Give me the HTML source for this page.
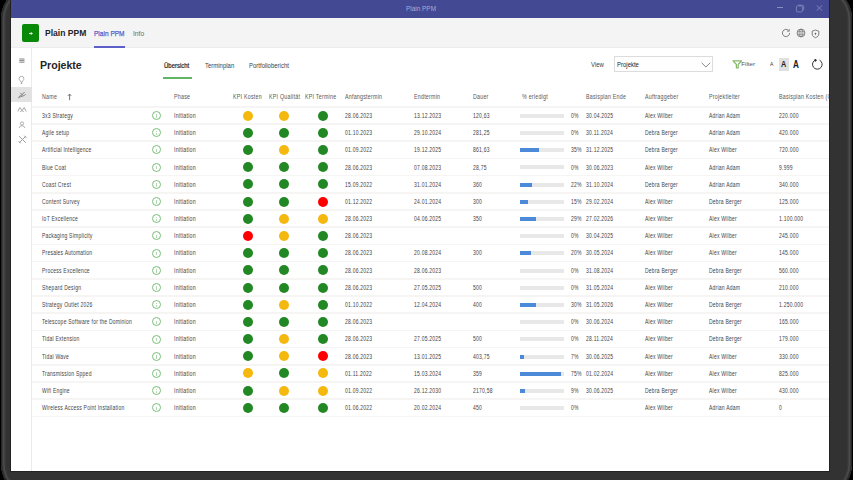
<!DOCTYPE html>
<html><head><meta charset="utf-8"><style>
*{margin:0;padding:0;box-sizing:border-box}
html,body{width:853px;height:480px;overflow:hidden;background:#000;font-family:"Liberation Sans",sans-serif}
.abs{position:absolute}
#bezel{position:absolute;left:1px;top:-14px;width:850.5px;height:511px;border-radius:33px;background:#323232;box-shadow:inset 0 0 0 1px #262626, inset 0 0 0 2px #3a3a3a, inset 0 0 0 3.5px #4a4a4a, inset 0 0 0 5px #383838}
#sedge{position:absolute;left:10px;top:-1px;width:820px;height:473px;background:#222}
#screen{position:absolute;left:11px;top:0;width:818px;height:471px;background:#fff;overflow:hidden}
#root{position:absolute;left:-11px;top:0;width:853px;height:480px}
#title{position:absolute;left:0;top:0;width:853px;height:18px;background:#434992}
#appbar{position:absolute;left:0;top:18px;width:853px;height:29.5px;background:#f4f4f4;border-bottom:1px solid #ececec}
#rail{position:absolute;left:11px;top:47.5px;width:20.5px;height:440px;background:#fff;border-right:1px solid #ebebeb}
.tx{position:absolute;white-space:nowrap;font-size:6.8px;letter-spacing:0.3px;line-height:8px;color:#444;transform-origin:0 50%;transform:translateY(-3.5px) scaleX(0.74)}
.hd{color:#575757;transform:translateY(-3.5px) scaleX(0.78)}
.ph{transform:translateY(-3.5px) scaleX(0.77)}
.hl{position:absolute;left:32px;width:800px;height:1.6px;background:#f6f5f3}
.dot{position:absolute;width:10px;height:10px;border-radius:50%}
.info{position:absolute;width:9px;height:9px;border-radius:50%;border:0.9px solid #78bf78}
.info i{position:absolute;left:3.3px;top:3.4px;width:0.8px;height:2.4px;background:#b0d8b0}
.info b{position:absolute;left:3.3px;top:2.2px;width:0.8px;height:0.7px;background:#b0d8b0}
.bar{position:absolute;left:519.6px;width:44.5px;height:4px;background:#e8e8e8}
.bar div{height:4px;background:#4a8ad8}
</style></head><body>
<div id="bezel"></div><div id="sedge"></div>
<div id="screen"><div id="root">
<div id="title"></div>
<div id="appbar"></div>
<div id="rail"></div>
<div class="tx" style="letter-spacing:0;left:405.6px;top:9px;font-size:7.3px;color:#a9abd8;transform:translateY(-4px) scaleX(0.88)">Plain PPM</div>
<div class="abs" style="left:777.3px;top:7.2px;width:6px;height:0.8px;background:#8b8dc4"></div>
<svg class="abs" style="left:795px;top:4px" width="10" height="9" viewBox="0 0 10 9"><rect x="1.4" y="1.9" width="6" height="6" rx="1" fill="none" stroke="#8b8dc4" stroke-width="0.8"/><path d="M3 1.2H7.5a1.2 1.2 0 0 1 1.2 1.2V6.4" fill="none" stroke="#8b8dc4" stroke-width="0.8"/></svg>
<svg class="abs" style="left:816px;top:5px" width="7" height="6" viewBox="0 0 7 6"><path d="M0.5 0.2L6.3 5.8M6.3 0.2L0.5 5.8" stroke="#8b8dc4" stroke-width="0.8"/></svg>
<div class="abs" style="left:21.6px;top:23.9px;width:17.8px;height:17.7px;border-radius:2px;background:#088a08"></div>
<svg class="abs" style="left:27.5px;top:30.5px" width="6" height="5" viewBox="0 0 6 5"><path d="M1 2.5H4.2M2.9 1.2L4.2 2.5L2.9 3.8" stroke="#fff" stroke-width="0.9" fill="none"/></svg>
<div class="tx" style="letter-spacing:0;left:44.6px;top:33px;font-size:9.4px;line-height:10px;font-weight:bold;color:#252424;transform:translateY(-5px) scaleX(0.91)">Plain PPM</div>
<div class="tx" style="letter-spacing:0;left:93.7px;top:33px;font-size:7.8px;color:#5a5dc6;-webkit-text-stroke:0.25px #5a5dc6;transform:translateY(-2.9px) scaleX(0.84)">Plain PPM</div>
<div class="abs" style="left:93.7px;top:45.5px;width:31px;height:2px;background:#5b5fc7"></div>
<div class="tx" style="letter-spacing:0;left:132.7px;top:33px;font-size:7.8px;color:#6b6b6b;transform:translateY(-2.9px) scaleX(0.86)">Info</div>
<svg class="abs" style="left:781px;top:28px" width="10" height="10" viewBox="0 0 10 10"><path d="M8.6 5A3.6 3.6 0 1 1 7.4 2.3" fill="none" stroke="#616161" stroke-width="0.8"/><path d="M8.2 1.2V3.2H6.2" fill="none" stroke="#616161" stroke-width="0.8"/></svg>
<svg class="abs" style="left:796px;top:28px" width="10" height="10" viewBox="0 0 10 10"><circle cx="5" cy="5" r="3.9" fill="none" stroke="#666" stroke-width="0.8"/><ellipse cx="5" cy="5" rx="1.9" ry="3.9" fill="none" stroke="#666" stroke-width="0.55"/><path d="M1.3 3.7H8.7M1.3 6.3H8.7M5 1.1V8.9" stroke="#666" stroke-width="0.55"/></svg>
<svg class="abs" style="left:811px;top:28.5px" width="9" height="10" viewBox="0 0 9 10"><path d="M4.5 1L1.2 2.2V5C1.2 6.9 2.7 8 4.5 8.7C6.3 8 7.8 6.9 7.8 5V2.2Z" fill="none" stroke="#616161" stroke-width="0.8"/><circle cx="4.5" cy="4.6" r="0.8" fill="#616161"/><path d="M3.9 4.8H5.1L4.5 6.3Z" fill="#616161"/></svg>
<div class="abs" style="left:11px;top:86.8px;width:20.5px;height:15.2px;background:#e2e2e2"></div>
<svg class="abs" style="left:19px;top:57.5px" width="6" height="6" viewBox="0 0 6 6"><path d="M0.3 1H5.5M0.3 2.6H5.5M0.3 4.2H5.5" stroke="#777" stroke-width="0.9"/></svg>
<svg class="abs" style="left:17px;top:75px" width="9" height="10" viewBox="0 0 9 10"><path d="M4.5 1.3A2.4 2.4 0 0 1 6.9 3.7C6.9 5 5.4 5.6 5.1 7.2H3.9C3.6 5.6 2.1 5 2.1 3.7A2.4 2.4 0 0 1 4.5 1.3ZM4 8H5L4.5 9Z" fill="none" stroke="#9a9a9a" stroke-width="0.8"/></svg>
<svg class="abs" style="left:17px;top:90px" width="10" height="10" viewBox="0 0 10 10"><path d="M1.2 8C2.5 7 4 6.5 5.5 6.2S8 5 8.8 4.2M1.8 6.8C3 5.6 4.5 5 6 4.6M3.4 2.8L5 4.8L7.6 2" fill="none" stroke="#858585" stroke-width="1"/></svg>
<svg class="abs" style="left:17px;top:105px" width="10" height="8" viewBox="0 0 10 8"><path d="M0.8 6.5L2.8 2.5L5 5.5L7.2 2.5L9.2 6.5M3.2 6.8L5 5.5L6.8 6.8" fill="none" stroke="#9c9c9c" stroke-width="0.9"/></svg>
<svg class="abs" style="left:17.5px;top:120.5px" width="8" height="8" viewBox="0 0 8 8"><circle cx="4" cy="2.5" r="1.6" fill="none" stroke="#9c9c9c" stroke-width="0.8"/><path d="M1.2 7C1.5 5.5 2.6 4.7 4 4.7S6.5 5.5 6.8 7" fill="none" stroke="#9c9c9c" stroke-width="0.8"/></svg>
<svg class="abs" style="left:17.5px;top:134.8px" width="9" height="9" viewBox="0 0 9 9"><path d="M1.2 1.2L7.8 7.8M7.8 1.2L1.2 7.8M6.3 0.7L8.3 2.7M0.7 6.3L2.7 8.3" fill="none" stroke="#9a9a9a" stroke-width="1"/></svg>
<div class="tx" style="letter-spacing:0;left:39.7px;top:65.5px;font-size:11.5px;line-height:12px;font-weight:bold;color:#242424;transform:translateY(-7px) scaleX(0.92)">Projekte</div>
<div class="tx" style="letter-spacing:0;left:164.1px;top:65.7px;font-size:6.8px;color:#242424;-webkit-text-stroke:0.2px #242424;transform:translateY(-4px) scaleX(0.88)">&Uuml;bersicht</div>
<div class="abs" style="left:163.3px;top:77px;width:29.2px;height:1.5px;background:#5fb563"></div>
<div class="tx" style="letter-spacing:0;left:204.8px;top:65.7px;font-size:6.8px;color:#424242;transform:translateY(-4px) scaleX(0.88)">Terminplan</div>
<div class="tx" style="letter-spacing:0;left:249px;top:65.7px;font-size:6.8px;color:#424242;transform:translateY(-4px) scaleX(0.88)">Portfoliobericht</div>
<div class="tx" style="letter-spacing:0;left:590.6px;top:65.2px;font-size:6.8px;color:#424242;transform:translateY(-4px) scaleX(0.88)">View</div>
<div class="abs" style="left:614.3px;top:56.3px;width:98.5px;height:16.2px;border:1px solid #dcdcdc;background:#fff"></div>
<div class="tx" style="letter-spacing:0;left:617px;top:65.2px;font-size:6.8px;color:#242424;transform:translateY(-4px) scaleX(0.88)">Projekte</div>
<svg class="abs" style="left:700.8px;top:62px" width="10" height="6" viewBox="0 0 10 6"><path d="M0.6 0.8L4.9 5L9.2 0.8" fill="none" stroke="#666" stroke-width="0.8"/></svg>
<svg class="abs" style="left:731.7px;top:59.6px" width="11" height="9" viewBox="0 0 11 9"><path d="M1 0.9H9.6L6.2 4.5V7.9H4.4V4.5Z" fill="none" stroke="#86b86a" stroke-width="1.2" stroke-linejoin="round"/></svg>
<div class="tx" style="letter-spacing:0;left:741.3px;top:64.2px;font-size:6.2px;color:#555;transform:translateY(-4px) scaleX(1.0)">Filter</div>
<div class="tx" style="letter-spacing:0;left:769.5px;top:64px;font-size:5.5px;color:#333;transform:translateY(-4px) scaleX(0.9)">A</div>
<div class="abs" style="left:778.7px;top:58px;width:10px;height:12.6px;background:#e0e0e0"></div>
<div class="tx" style="letter-spacing:0;left:780.9px;top:65.3px;font-size:8.5px;line-height:9px;color:#222;font-weight:bold;transform:translateY(-4.6px) scaleX(0.85)">A</div>
<div class="tx" style="letter-spacing:0;left:792.9px;top:64.8px;font-size:10.5px;line-height:11px;color:#222;font-weight:bold;transform:translateY(-5.6px) scaleX(0.78)">A</div>
<svg class="abs" style="left:810.5px;top:58px" width="13" height="13" viewBox="0 0 13 13"><path d="M8.5 2.1A4.8 4.8 0 1 1 4.6 1.9" fill="none" stroke="#3a3a3a" stroke-width="1"/><path d="M3.8 1.2L5.6 2L4.4 3.6Z" fill="#222" stroke="#222" stroke-width="0.6"/></svg>
<div class="tx hd" style="left:42.2px;top:96.0px;">Name</div>
<div class="tx hd" style="left:173.7px;top:96.0px;">Phase</div>
<div class="tx hd" style="left:232.9px;top:96.0px;">KPI Kosten</div>
<div class="tx hd" style="left:268.8px;top:96.0px;">KPI Qualit&auml;t</div>
<div class="tx hd" style="left:304.9px;top:96.0px;">KPI Termine</div>
<div class="tx hd" style="left:345.4px;top:96.0px;">Anfangstermin</div>
<div class="tx hd" style="left:414px;top:96.0px;">Endtermin</div>
<div class="tx hd" style="left:473.2px;top:96.0px;">Dauer</div>
<div class="tx hd" style="left:521.9px;top:96.0px;">% erledigt</div>
<div class="tx hd" style="left:586px;top:96.0px;">Basisplan Ende</div>
<div class="tx hd" style="left:645px;top:96.0px;">Auftraggeber</div>
<div class="tx hd" style="left:709px;top:96.0px;">Projektleiter</div>
<div class="tx hd" style="left:779.3px;top:96.0px;">Basisplan Kosten (CHF)</div>
<svg class="abs" style="left:66px;top:93px" width="7" height="8" viewBox="0 0 7 8"><path d="M3.6 7.2V1.2M1.9 2.9L3.6 1.1L5.3 2.9" stroke="#555" stroke-width="0.8" fill="none"/></svg>
<div class="hl" style="top:106.10px"></div>
<div class="hl" style="top:123.29px"></div>
<div class="hl" style="top:140.48px"></div>
<div class="hl" style="top:157.67px"></div>
<div class="hl" style="top:174.86px"></div>
<div class="hl" style="top:192.05px"></div>
<div class="hl" style="top:209.24px"></div>
<div class="hl" style="top:226.43px"></div>
<div class="hl" style="top:243.62px"></div>
<div class="hl" style="top:260.81px"></div>
<div class="hl" style="top:278.00px"></div>
<div class="hl" style="top:295.19px"></div>
<div class="hl" style="top:312.38px"></div>
<div class="hl" style="top:329.57px"></div>
<div class="hl" style="top:346.76px"></div>
<div class="hl" style="top:363.95px"></div>
<div class="hl" style="top:381.14px"></div>
<div class="hl" style="top:398.33px"></div>
<div class="hl" style="top:415.52px"></div>
<div class="tx" style="left:42.2px;top:115.3px;">3x3 Strategy</div>
<div class="info" style="left:152.1px;top:111.09px"><i></i><b></b></div>
<div class="tx ph" style="left:173.7px;top:115.3px;">Initiation</div>
<div class="dot" style="left:243.20px;top:110.59px;background:#f4b80e"></div>
<div class="dot" style="left:279.20px;top:110.59px;background:#f4b80e"></div>
<div class="dot" style="left:317.60px;top:110.59px;background:#228824"></div>
<div class="tx" style="left:345.4px;top:115.3px;">28.06.2023</div>
<div class="tx" style="left:414px;top:115.3px;">13.12.2023</div>
<div class="tx" style="left:473.2px;top:115.3px;">120,63</div>
<div class="bar" style="top:113.89px"><div style="width:0px"></div></div>
<div class="tx" style="left:571px;top:115.3px;">0%</div>
<div class="tx" style="left:586px;top:115.3px;">30.04.2025</div>
<div class="tx" style="left:645px;top:115.3px;">Alex Wilber</div>
<div class="tx" style="left:709px;top:115.3px;">Adrian Adam</div>
<div class="tx" style="left:779.3px;top:115.3px;">220.000</div>
<div class="tx" style="left:42.2px;top:132.3px;">Agile setup</div>
<div class="info" style="left:152.1px;top:128.28px"><i></i><b></b></div>
<div class="tx ph" style="left:173.7px;top:132.3px;">Initiation</div>
<div class="dot" style="left:243.20px;top:127.78px;background:#228824"></div>
<div class="dot" style="left:279.20px;top:127.78px;background:#228824"></div>
<div class="dot" style="left:317.60px;top:127.78px;background:#228824"></div>
<div class="tx" style="left:345.4px;top:132.3px;">01.10.2023</div>
<div class="tx" style="left:414px;top:132.3px;">29.10.2024</div>
<div class="tx" style="left:473.2px;top:132.3px;">281,25</div>
<div class="bar" style="top:131.09px"><div style="width:0px"></div></div>
<div class="tx" style="left:571px;top:132.3px;">0%</div>
<div class="tx" style="left:586px;top:132.3px;">30.11.2024</div>
<div class="tx" style="left:645px;top:132.3px;">Debra Berger</div>
<div class="tx" style="left:709px;top:132.3px;">Adrian Adam</div>
<div class="tx" style="left:779.3px;top:132.3px;">420.000</div>
<div class="tx" style="left:42.2px;top:149.3px;">Artificial Intelligence</div>
<div class="info" style="left:152.1px;top:145.47px"><i></i><b></b></div>
<div class="tx ph" style="left:173.7px;top:149.3px;">Initiation</div>
<div class="dot" style="left:243.20px;top:144.97px;background:#228824"></div>
<div class="dot" style="left:279.20px;top:144.97px;background:#f4b80e"></div>
<div class="dot" style="left:317.60px;top:144.97px;background:#228824"></div>
<div class="tx" style="left:345.4px;top:149.3px;">01.09.2022</div>
<div class="tx" style="left:414px;top:149.3px;">19.12.2025</div>
<div class="tx" style="left:473.2px;top:149.3px;">861,63</div>
<div class="bar" style="top:148.28px"><div style="width:19.3px"></div></div>
<div class="tx" style="left:571px;top:149.3px;">35%</div>
<div class="tx" style="left:586px;top:149.3px;">31.12.2025</div>
<div class="tx" style="left:645px;top:149.3px;">Debra Berger</div>
<div class="tx" style="left:709px;top:149.3px;">Alex Wilber</div>
<div class="tx" style="left:779.3px;top:149.3px;">720.000</div>
<div class="tx" style="left:42.2px;top:167.3px;">Blue Coat</div>
<div class="info" style="left:152.1px;top:162.66px"><i></i><b></b></div>
<div class="tx ph" style="left:173.7px;top:167.3px;">Initiation</div>
<div class="dot" style="left:243.20px;top:162.16px;background:#228824"></div>
<div class="dot" style="left:279.20px;top:162.16px;background:#228824"></div>
<div class="dot" style="left:317.60px;top:162.16px;background:#228824"></div>
<div class="tx" style="left:345.4px;top:167.3px;">28.06.2023</div>
<div class="tx" style="left:414px;top:167.3px;">07.08.2023</div>
<div class="tx" style="left:473.2px;top:167.3px;">28,75</div>
<div class="bar" style="top:165.47px"><div style="width:0px"></div></div>
<div class="tx" style="left:571px;top:167.3px;">0%</div>
<div class="tx" style="left:586px;top:167.3px;">30.06.2023</div>
<div class="tx" style="left:645px;top:167.3px;">Alex Wilber</div>
<div class="tx" style="left:709px;top:167.3px;">Adrian Adam</div>
<div class="tx" style="left:779.3px;top:167.3px;">9.999</div>
<div class="tx" style="left:42.2px;top:184.3px;">Coast Crest</div>
<div class="info" style="left:152.1px;top:179.85px"><i></i><b></b></div>
<div class="tx ph" style="left:173.7px;top:184.3px;">Initiation</div>
<div class="dot" style="left:243.20px;top:179.35px;background:#228824"></div>
<div class="dot" style="left:279.20px;top:179.35px;background:#228824"></div>
<div class="dot" style="left:317.60px;top:179.35px;background:#228824"></div>
<div class="tx" style="left:345.4px;top:184.3px;">15.09.2022</div>
<div class="tx" style="left:414px;top:184.3px;">31.01.2024</div>
<div class="tx" style="left:473.2px;top:184.3px;">360</div>
<div class="bar" style="top:182.66px"><div style="width:12.3px"></div></div>
<div class="tx" style="left:571px;top:184.3px;">22%</div>
<div class="tx" style="left:586px;top:184.3px;">31.10.2024</div>
<div class="tx" style="left:645px;top:184.3px;">Debra Berger</div>
<div class="tx" style="left:709px;top:184.3px;">Adrian Adam</div>
<div class="tx" style="left:779.3px;top:184.3px;">340.000</div>
<div class="tx" style="left:42.2px;top:201.3px;">Content Survey</div>
<div class="info" style="left:152.1px;top:197.04px"><i></i><b></b></div>
<div class="tx ph" style="left:173.7px;top:201.3px;">Initiation</div>
<div class="dot" style="left:243.20px;top:196.54px;background:#228824"></div>
<div class="dot" style="left:279.20px;top:196.54px;background:#228824"></div>
<div class="dot" style="left:317.60px;top:196.54px;background:#ff0000"></div>
<div class="tx" style="left:345.4px;top:201.3px;">01.12.2022</div>
<div class="tx" style="left:414px;top:201.3px;">24.01.2024</div>
<div class="tx" style="left:473.2px;top:201.3px;">300</div>
<div class="bar" style="top:199.84px"><div style="width:8.3px"></div></div>
<div class="tx" style="left:571px;top:201.3px;">15%</div>
<div class="tx" style="left:586px;top:201.3px;">29.02.2024</div>
<div class="tx" style="left:645px;top:201.3px;">Alex Wilber</div>
<div class="tx" style="left:709px;top:201.3px;">Debra Berger</div>
<div class="tx" style="left:779.3px;top:201.3px;">125.000</div>
<div class="tx" style="left:42.2px;top:218.3px;">IoT Excellence</div>
<div class="info" style="left:152.1px;top:214.24px"><i></i><b></b></div>
<div class="tx ph" style="left:173.7px;top:218.3px;">Initiation</div>
<div class="dot" style="left:243.20px;top:213.74px;background:#228824"></div>
<div class="dot" style="left:279.20px;top:213.74px;background:#f4b80e"></div>
<div class="dot" style="left:317.60px;top:213.74px;background:#f4b80e"></div>
<div class="tx" style="left:345.4px;top:218.3px;">28.06.2023</div>
<div class="tx" style="left:414px;top:218.3px;">04.06.2025</div>
<div class="tx" style="left:473.2px;top:218.3px;">350</div>
<div class="bar" style="top:217.04px"><div style="width:16px"></div></div>
<div class="tx" style="left:571px;top:218.3px;">29%</div>
<div class="tx" style="left:586px;top:218.3px;">27.02.2026</div>
<div class="tx" style="left:645px;top:218.3px;">Alex Wilber</div>
<div class="tx" style="left:709px;top:218.3px;">Alex Wilber</div>
<div class="tx" style="left:779.3px;top:218.3px;">1.100.000</div>
<div class="tx" style="left:42.2px;top:235.3px;">Packaging Simplicity</div>
<div class="info" style="left:152.1px;top:231.43px"><i></i><b></b></div>
<div class="tx ph" style="left:173.7px;top:235.3px;">Initiation</div>
<div class="dot" style="left:243.20px;top:230.93px;background:#ff0000"></div>
<div class="dot" style="left:279.20px;top:230.93px;background:#f4b80e"></div>
<div class="dot" style="left:317.60px;top:230.93px;background:#228824"></div>
<div class="tx" style="left:345.4px;top:235.3px;">28.06.2023</div>
<div class="bar" style="top:234.23px"><div style="width:0px"></div></div>
<div class="tx" style="left:571px;top:235.3px;">0%</div>
<div class="tx" style="left:586px;top:235.3px;">30.04.2025</div>
<div class="tx" style="left:645px;top:235.3px;">Alex Wilber</div>
<div class="tx" style="left:709px;top:235.3px;">Alex Wilber</div>
<div class="tx" style="left:779.3px;top:235.3px;">245.000</div>
<div class="tx" style="left:42.2px;top:252.3px;">Presales Automation</div>
<div class="info" style="left:152.1px;top:248.62px"><i></i><b></b></div>
<div class="tx ph" style="left:173.7px;top:252.3px;">Initiation</div>
<div class="dot" style="left:243.20px;top:248.12px;background:#228824"></div>
<div class="dot" style="left:279.20px;top:248.12px;background:#228824"></div>
<div class="dot" style="left:317.60px;top:248.12px;background:#228824"></div>
<div class="tx" style="left:345.4px;top:252.3px;">28.06.2023</div>
<div class="tx" style="left:414px;top:252.3px;">20.08.2024</div>
<div class="tx" style="left:473.2px;top:252.3px;">300</div>
<div class="bar" style="top:251.42px"><div style="width:11px"></div></div>
<div class="tx" style="left:571px;top:252.3px;">20%</div>
<div class="tx" style="left:586px;top:252.3px;">30.05.2024</div>
<div class="tx" style="left:645px;top:252.3px;">Alex Wilber</div>
<div class="tx" style="left:709px;top:252.3px;">Alex Wilber</div>
<div class="tx" style="left:779.3px;top:252.3px;">145.000</div>
<div class="tx" style="left:42.2px;top:270.3px;">Process Excellence</div>
<div class="info" style="left:152.1px;top:265.81px"><i></i><b></b></div>
<div class="tx ph" style="left:173.7px;top:270.3px;">Initiation</div>
<div class="dot" style="left:243.20px;top:265.31px;background:#228824"></div>
<div class="dot" style="left:279.20px;top:265.31px;background:#228824"></div>
<div class="dot" style="left:317.60px;top:265.31px;background:#228824"></div>
<div class="tx" style="left:345.4px;top:270.3px;">28.06.2023</div>
<div class="tx" style="left:414px;top:270.3px;">28.06.2023</div>
<div class="bar" style="top:268.61px"><div style="width:0px"></div></div>
<div class="tx" style="left:571px;top:270.3px;">0%</div>
<div class="tx" style="left:586px;top:270.3px;">31.08.2024</div>
<div class="tx" style="left:645px;top:270.3px;">Debra Berger</div>
<div class="tx" style="left:709px;top:270.3px;">Debra Berger</div>
<div class="tx" style="left:779.3px;top:270.3px;">560.000</div>
<div class="tx" style="left:42.2px;top:287.3px;">Shepard Design</div>
<div class="info" style="left:152.1px;top:283.00px"><i></i><b></b></div>
<div class="tx ph" style="left:173.7px;top:287.3px;">Initiation</div>
<div class="dot" style="left:243.20px;top:282.50px;background:#228824"></div>
<div class="dot" style="left:279.20px;top:282.50px;background:#228824"></div>
<div class="dot" style="left:317.60px;top:282.50px;background:#228824"></div>
<div class="tx" style="left:345.4px;top:287.3px;">28.06.2023</div>
<div class="tx" style="left:414px;top:287.3px;">27.05.2025</div>
<div class="tx" style="left:473.2px;top:287.3px;">500</div>
<div class="bar" style="top:285.80px"><div style="width:0px"></div></div>
<div class="tx" style="left:571px;top:287.3px;">0%</div>
<div class="tx" style="left:586px;top:287.3px;">31.05.2024</div>
<div class="tx" style="left:645px;top:287.3px;">Alex Wilber</div>
<div class="tx" style="left:709px;top:287.3px;">Adrian Adam</div>
<div class="tx" style="left:779.3px;top:287.3px;">210.000</div>
<div class="tx" style="left:42.2px;top:304.3px;">Strategy Outlet 2026</div>
<div class="info" style="left:152.1px;top:300.19px"><i></i><b></b></div>
<div class="tx ph" style="left:173.7px;top:304.3px;">Initiation</div>
<div class="dot" style="left:243.20px;top:299.69px;background:#228824"></div>
<div class="dot" style="left:279.20px;top:299.69px;background:#f4b80e"></div>
<div class="dot" style="left:317.60px;top:299.69px;background:#228824"></div>
<div class="tx" style="left:345.4px;top:304.3px;">01.10.2022</div>
<div class="tx" style="left:414px;top:304.3px;">12.04.2024</div>
<div class="tx" style="left:473.2px;top:304.3px;">400</div>
<div class="bar" style="top:302.99px"><div style="width:16.7px"></div></div>
<div class="tx" style="left:571px;top:304.3px;">30%</div>
<div class="tx" style="left:586px;top:304.3px;">31.05.2026</div>
<div class="tx" style="left:645px;top:304.3px;">Alex Wilber</div>
<div class="tx" style="left:709px;top:304.3px;">Debra Berger</div>
<div class="tx" style="left:779.3px;top:304.3px;">1.250.000</div>
<div class="tx" style="left:42.2px;top:321.3px;">Telescope Software for the Dominion</div>
<div class="info" style="left:152.1px;top:317.38px"><i></i><b></b></div>
<div class="tx ph" style="left:173.7px;top:321.3px;">Initiation</div>
<div class="dot" style="left:243.20px;top:316.88px;background:#228824"></div>
<div class="dot" style="left:279.20px;top:316.88px;background:#228824"></div>
<div class="dot" style="left:317.60px;top:316.88px;background:#228824"></div>
<div class="tx" style="left:345.4px;top:321.3px;">28.06.2023</div>
<div class="bar" style="top:320.18px"><div style="width:0px"></div></div>
<div class="tx" style="left:571px;top:321.3px;">0%</div>
<div class="tx" style="left:586px;top:321.3px;">30.06.2024</div>
<div class="tx" style="left:645px;top:321.3px;">Alex Wilber</div>
<div class="tx" style="left:709px;top:321.3px;">Debra Berger</div>
<div class="tx" style="left:779.3px;top:321.3px;">165.000</div>
<div class="tx" style="left:42.2px;top:338.3px;">Tidal Extension</div>
<div class="info" style="left:152.1px;top:334.57px"><i></i><b></b></div>
<div class="tx ph" style="left:173.7px;top:338.3px;">Initiation</div>
<div class="dot" style="left:243.20px;top:334.07px;background:#228824"></div>
<div class="dot" style="left:279.20px;top:334.07px;background:#f4b80e"></div>
<div class="dot" style="left:317.60px;top:334.07px;background:#228824"></div>
<div class="tx" style="left:345.4px;top:338.3px;">28.06.2023</div>
<div class="tx" style="left:414px;top:338.3px;">27.05.2025</div>
<div class="tx" style="left:473.2px;top:338.3px;">500</div>
<div class="bar" style="top:337.37px"><div style="width:0px"></div></div>
<div class="tx" style="left:571px;top:338.3px;">0%</div>
<div class="tx" style="left:586px;top:338.3px;">28.11.2024</div>
<div class="tx" style="left:645px;top:338.3px;">Alex Wilber</div>
<div class="tx" style="left:709px;top:338.3px;">Debra Berger</div>
<div class="tx" style="left:779.3px;top:338.3px;">179.000</div>
<div class="tx" style="left:42.2px;top:356.3px;">Tidal Wave</div>
<div class="info" style="left:152.1px;top:351.76px"><i></i><b></b></div>
<div class="tx ph" style="left:173.7px;top:356.3px;">Initiation</div>
<div class="dot" style="left:243.20px;top:351.26px;background:#228824"></div>
<div class="dot" style="left:279.20px;top:351.26px;background:#f4b80e"></div>
<div class="dot" style="left:317.60px;top:351.26px;background:#ff0000"></div>
<div class="tx" style="left:345.4px;top:356.3px;">28.06.2023</div>
<div class="tx" style="left:414px;top:356.3px;">13.01.2025</div>
<div class="tx" style="left:473.2px;top:356.3px;">403,75</div>
<div class="bar" style="top:354.56px"><div style="width:4.3px"></div></div>
<div class="tx" style="left:571px;top:356.3px;">7%</div>
<div class="tx" style="left:586px;top:356.3px;">30.06.2025</div>
<div class="tx" style="left:645px;top:356.3px;">Alex Wilber</div>
<div class="tx" style="left:709px;top:356.3px;">Alex Wilber</div>
<div class="tx" style="left:779.3px;top:356.3px;">330.000</div>
<div class="tx" style="left:42.2px;top:373.3px;">Transmission Spped</div>
<div class="info" style="left:152.1px;top:368.95px"><i></i><b></b></div>
<div class="tx ph" style="left:173.7px;top:373.3px;">Initiation</div>
<div class="dot" style="left:243.20px;top:368.45px;background:#f4b80e"></div>
<div class="dot" style="left:279.20px;top:368.45px;background:#228824"></div>
<div class="dot" style="left:317.60px;top:368.45px;background:#f4b80e"></div>
<div class="tx" style="left:345.4px;top:373.3px;">01.11.2022</div>
<div class="tx" style="left:414px;top:373.3px;">15.03.2024</div>
<div class="tx" style="left:473.2px;top:373.3px;">359</div>
<div class="bar" style="top:371.75px"><div style="width:41.3px"></div></div>
<div class="tx" style="left:571px;top:373.3px;">75%</div>
<div class="tx" style="left:586px;top:373.3px;">01.02.2024</div>
<div class="tx" style="left:645px;top:373.3px;">Alex Wilber</div>
<div class="tx" style="left:709px;top:373.3px;">Alex Wilber</div>
<div class="tx" style="left:779.3px;top:373.3px;">825.000</div>
<div class="tx" style="left:42.2px;top:390.3px;">Wifi Engine</div>
<div class="info" style="left:152.1px;top:386.14px"><i></i><b></b></div>
<div class="tx ph" style="left:173.7px;top:390.3px;">Initiation</div>
<div class="dot" style="left:243.20px;top:385.64px;background:#228824"></div>
<div class="dot" style="left:279.20px;top:385.64px;background:#f4b80e"></div>
<div class="dot" style="left:317.60px;top:385.64px;background:#f4b80e"></div>
<div class="tx" style="left:345.4px;top:390.3px;">01.09.2022</div>
<div class="tx" style="left:414px;top:390.3px;">26.12.2030</div>
<div class="tx" style="left:473.2px;top:390.3px;">2170,58</div>
<div class="bar" style="top:388.94px"><div style="width:5.3px"></div></div>
<div class="tx" style="left:571px;top:390.3px;">9%</div>
<div class="tx" style="left:586px;top:390.3px;">30.06.2025</div>
<div class="tx" style="left:645px;top:390.3px;">Debra Berger</div>
<div class="tx" style="left:709px;top:390.3px;">Alex Wilber</div>
<div class="tx" style="left:779.3px;top:390.3px;">430.000</div>
<div class="tx" style="left:42.2px;top:407.3px;">Wireless Access Point Installation</div>
<div class="info" style="left:152.1px;top:403.33px"><i></i><b></b></div>
<div class="tx ph" style="left:173.7px;top:407.3px;">Initiation</div>
<div class="dot" style="left:243.20px;top:402.83px;background:#228824"></div>
<div class="dot" style="left:279.20px;top:402.83px;background:#228824"></div>
<div class="dot" style="left:317.60px;top:402.83px;background:#228824"></div>
<div class="tx" style="left:345.4px;top:407.3px;">01.06.2022</div>
<div class="tx" style="left:414px;top:407.3px;">20.02.2024</div>
<div class="tx" style="left:473.2px;top:407.3px;">450</div>
<div class="bar" style="top:406.13px"><div style="width:0px"></div></div>
<div class="tx" style="left:571px;top:407.3px;">0%</div>
<div class="tx" style="left:645px;top:407.3px;">Alex Wilber</div>
<div class="tx" style="left:709px;top:407.3px;">Adrian Adam</div>
<div class="tx" style="left:779.3px;top:407.3px;">0</div>
</div></div>
</body></html>
